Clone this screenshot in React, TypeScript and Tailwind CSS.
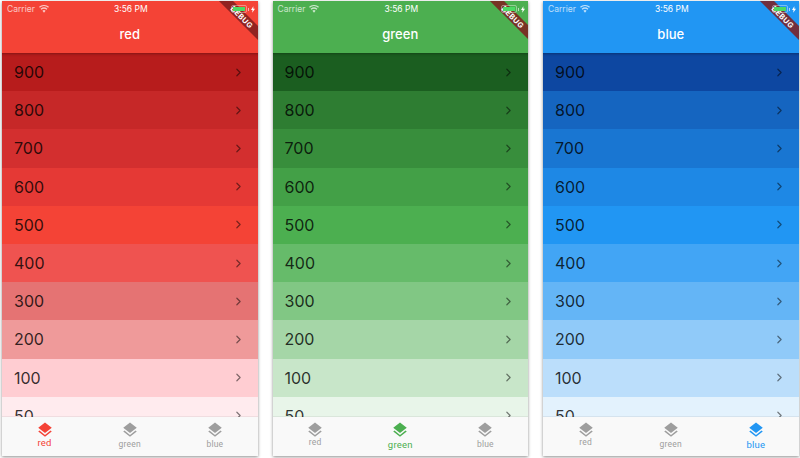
import { ChevronRight } from "lucide-react";

const palettes = {
  red: {
    header: "bg-[#f44336]",
    active: "text-[#f44336]",
    rows: [
      ["900", "bg-[#b71c1c]"],
      ["800", "bg-[#c62828]"],
      ["700", "bg-[#d32f2f]"],
      ["600", "bg-[#e53935]"],
      ["500", "bg-[#f44336]"],
      ["400", "bg-[#ef5350]"],
      ["300", "bg-[#e57373]"],
      ["200", "bg-[#ef9a9a]"],
      ["100", "bg-[#ffcdd2]"],
      ["50", "bg-[#ffebee]"],
    ],
  },
  green: {
    header: "bg-[#4caf50]",
    active: "text-[#4caf50]",
    rows: [
      ["900", "bg-[#1b5e20]"],
      ["800", "bg-[#2e7d32]"],
      ["700", "bg-[#388e3c]"],
      ["600", "bg-[#43a047]"],
      ["500", "bg-[#4caf50]"],
      ["400", "bg-[#66bb6a]"],
      ["300", "bg-[#81c784]"],
      ["200", "bg-[#a5d6a7]"],
      ["100", "bg-[#c8e6c9]"],
      ["50", "bg-[#e8f5e9]"],
    ],
  },
  blue: {
    header: "bg-[#2196f3]",
    active: "text-[#2196f3]",
    rows: [
      ["900", "bg-[#0d47a1]"],
      ["800", "bg-[#1565c0]"],
      ["700", "bg-[#1976d2]"],
      ["600", "bg-[#1e88e5]"],
      ["500", "bg-[#2196f3]"],
      ["400", "bg-[#42a5f5]"],
      ["300", "bg-[#64b5f6]"],
      ["200", "bg-[#90caf9]"],
      ["100", "bg-[#bbdefb]"],
      ["50", "bg-[#e3f2fd]"],
    ],
  },
};

type Tab = keyof typeof palettes;
const tabs: Tab[] = ["red", "green", "blue"];

function Wifi() {
  return (
    <svg viewBox="0 0 16 12" className="w-[10px] h-[8px] ml-[4px]" fill="white">
      <path d="M8 12 5.400 8.900a4 4 0 0 1 5.200 0L8 12zM3.900 7.200 2.500 5.500a8.500 8.500 0 0 1 11 0l-1.400 1.700a6.300 6.300 0 0 0-8.200 0zM1.300 4 0 2.500a12.400 12.400 0 0 1 16 0L14.700 4a10.400 10.400 0 0 0-13.400 0z" />
    </svg>
  );
}

function Battery() {
  return (
    <div className="flex items-center">
      <div className="w-[16px] h-[8px] rounded-[2px] border border-white/40 p-[1px]">
        <div className="w-full h-full bg-[#4cd964]" />
      </div>
      <div className="w-[1px] h-[3px] bg-white/60 ml-[1px]" />
      <svg viewBox="0 0 6 10" className="w-[4px] h-[7px] ml-[2px]" fill="white">
        <path d="M3.500 0 0 5.600h2.300L1.800 10 6 3.900H3.500z" />
      </svg>
    </div>
  );
}

function LayersIcon({ className }: { className: string }) {
  return (
    <svg viewBox="0 0 24 24" className={className} fill="currentColor">
      <path d="M11.990 18.540l-7.370-5.730L3 14.070l9 7 9-7-1.630-1.270-7.380 5.740zM12 16l7.360-5.730L21 9l-9-7-9 7 1.630 1.270L12 16z" />
    </svg>
  );
}

function Phone({ tab }: { tab: Tab }) {
  const p = palettes[tab];
  return (
    <div className="relative w-[255.500px] h-[454.500px] flex flex-col overflow-hidden shadow-[0_1px_3px_rgba(0,0,0,0.45)]">
      <div className={`${p.header} h-[52px] shrink-0 flex flex-col`}>
        <div className="relative z-20 h-[15px] pl-[5px] pr-[3px] pt-[1px] flex items-center justify-between text-white text-[8.500px] leading-none">
          <div className="flex-1 flex items-center opacity-70">
            Carrier
            <Wifi />
          </div>
          <div>3:56 PM</div>
          <div className="flex-1 flex justify-end">
            <Battery />
          </div>
        </div>
        <div className="flex-1 flex items-center justify-center text-white text-[13px] font-medium">
          {tab}
        </div>
      </div>

      <div className="flex-1 min-h-0 overflow-hidden">
        {p.rows.map(([shade, bg], i) => (
          <div
            key={shade}
            className={`${bg} h-[38.200px] pl-[12px] pr-[13px] flex items-center justify-between ${
              i === 0 ? "shadow-[inset_0_3px_3px_-2px_rgba(0,0,0,0.3)]" : ""
            }`}
          >
            <span className="text-[16px] leading-none text-black/80">{shade}</span>
            <ChevronRight className="w-[13px] h-[13px] text-black/50" strokeWidth={2.2} />
          </div>
        ))}
      </div>

      <div className="h-[38.500px] shrink-0 bg-[#f9f9f9] grid grid-cols-3 shadow-[0_-1px_0_rgba(0,0,0,0.06)] z-10 font-['Roboto',sans-serif]">
        {tabs.map((t) => {
          const on = t === tab;
          return (
            <div key={t} className={`flex flex-col items-center pt-[4px] ${on ? p.active : "text-[#9e9e9e]"}`}>
              <LayersIcon className="w-[18px] h-[18px]" />
              <span
                className={`leading-none ${t === "red" ? "-mt-[1px]" : "mt-[1px]"} ${
                  on ? "text-[9.500px]" : "text-[8.500px]"
                } tracking-[0.2px]`}
              >
                {t}
              </span>
            </div>
          );
        })}
      </div>

      {/* debug banner */}
      <div className="absolute top-[10.500px] right-[-17.500px] w-[66px] h-[10px] pt-[1px] rotate-45 bg-[#7f1d1d]/85 flex items-center justify-center text-white text-[7.500px] font-bold leading-none tracking-[0.4px]">
        DEBUG
      </div>
    </div>
  );
}

export default function App() {
  return (
    <div className="w-[800px] h-[458px] bg-white flex gap-[15px] pl-[2px] pt-[1px] overflow-hidden font-['Inter',sans-serif]">
      {tabs.map((t) => (
        <Phone key={t} tab={t} />
      ))}
    </div>
  );
}
